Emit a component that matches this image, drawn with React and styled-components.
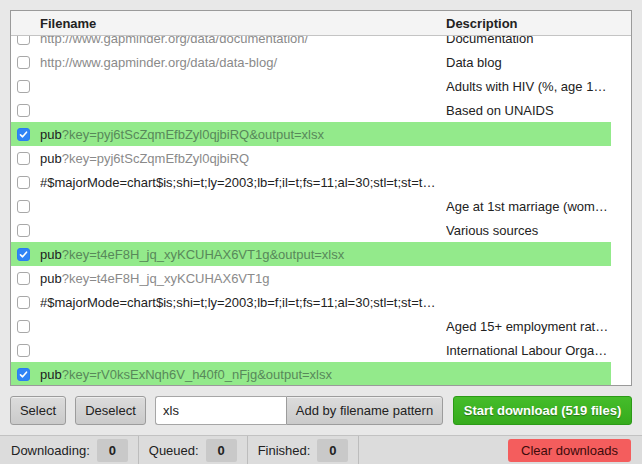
import React from "react";
import styled, { createGlobalStyle } from "styled-components";

const GlobalStyle = createGlobalStyle`
  html, body {
    margin: 0;
    padding: 0;
    background: #e8e8e8;
    font-family: "Liberation Sans", Arial, sans-serif;
    font-size: 13px;
    color: #222;
  }
`;

const Page = styled.div`
  width: 642px;
  height: 464px;
  display: flex;
  flex-direction: column;
  overflow: hidden;
`;

const TablePanel = styled.div`
  margin: 10px 10px 0 10px;
  height: 376px;
  box-sizing: border-box;
  border: 1px solid #9a9a9a;
  background: #fff;
  display: flex;
  flex-direction: column;
  overflow: hidden;
`;

const Cols = styled.div`
  display: grid;
  grid-template-columns: 29px 406px 1fr;
  align-items: center;
`;

const HeaderRow = styled(Cols)`
  height: 24px;
  flex-shrink: 0;
  background: #f4f4f4;
  border-bottom: 1px solid #c4c4c4;
  font-weight: bold;
  color: #222;
  padding-right: 20px;
`;

const Body = styled.div`
  flex: 1;
  overflow: hidden;
  padding-right: 20px;
`;

const List = styled.div`
  margin-top: -10px;
`;

const Row = styled(Cols)`
  height: 24px;
  background: ${(p) => (p.$checked ? "#93ea8b" : "#fff")};
`;

const Cell = styled.div`
  white-space: nowrap;
  overflow: hidden;
  text-overflow: ellipsis;
  padding-right: ${(p) => p.$pr ?? 8}px;
`;

const CheckCell = styled.div`
  padding-left: 6px;
  display: flex;
  align-items: center;
`;

const Box = styled.span`
  width: 13px;
  height: 13px;
  box-sizing: border-box;
  border-radius: 3px;
  border: 1px solid ${(p) => (p.$checked ? "#2b7cf3" : "#a8a8a8")};
  background: ${(p) => (p.$checked ? "#3084f5" : "#fff")};
  display: flex;
  align-items: center;
  justify-content: center;
`;

const Dim = styled.span`
  color: ${(p) => (p.$onGreen ? "#58885a" : "#8a8a8a")};
`;

const Dark = styled.span`
  color: #222;
`;

const Toolbar = styled.div`
  display: flex;
  align-items: center;
  padding: 10px;
  height: 29px;
  gap: 9px;
`;

const Button = styled.button`
  font-family: inherit;
  font-size: 13px;
  white-space: nowrap;
  width: ${(p) => p.$w}px;
  height: 29px;
  box-sizing: border-box;
  padding: 0;
  border: 1px solid #9c9c9c;
  border-radius: ${(p) => (p.$joined ? "0 3px 3px 0" : "3px")};
  background: linear-gradient(#dcdcdc, #cacaca);
  color: #222;
  box-shadow: inset 0 1px 0 rgba(255, 255, 255, 0.5);
`;

const PatternGroup = styled.div`
  display: flex;
`;

const PatternInput = styled.input`
  font-family: inherit;
  font-size: 13px;
  width: 131px;
  height: 29px;
  box-sizing: border-box;
  border: 1px solid #a6a6a6;
  border-right: none;
  border-radius: 3px 0 0 3px;
  padding: 0 7px;
  background: #fff;
  color: #222;
  outline: none;
`;

const StartButton = styled.button`
  font-family: inherit;
  font-size: 13px;
  font-weight: bold;
  white-space: nowrap;
  height: 29px;
  width: 179px;
  margin-left: 1px;
  padding: 0;
  box-sizing: border-box;
  border: 1px solid #2c9a17;
  border-radius: 3px;
  background: linear-gradient(#45bd2a, #36ab1d);
  color: #fff;
  text-shadow: 0 1px 1px rgba(0, 0, 0, 0.35);
`;

const StatusBar = styled.div`
  flex: 1;
  display: flex;
  align-items: center;
  background: #dcdcdc;
  border-top: 1px solid #c2c2c2;
`;

const Stat = styled.div`
  display: flex;
  align-items: center;
  align-self: stretch;
  gap: 7px;
  padding: 0 10px 0 ${(p) => (p.$first ? 11 : 10)}px;
  border-right: 1px solid #bdbdbd;
  color: #222;
`;

const Badge = styled.span`
  display: inline-flex;
  align-items: center;
  justify-content: center;
  width: 31px;
  height: 23px;
  background: #c9c9c9;
  border-radius: 2px;
  font-weight: bold;
`;

const ClearButton = styled.button`
  font-family: inherit;
  font-size: 13px;
  margin: 0 11px 0 auto;
  width: 123px;
  height: 23px;
  padding: 0;
  border: none;
  border-radius: 3px;
  background: #f45d5d;
  color: #3d0b0b;
`;

const rows = [
  { url: "http://www.gapminder.org/data/documentation/", desc: "Documentation" },
  { url: "http://www.gapminder.org/data/data-blog/", desc: "Data blog" },
  { desc: "Adults with HIV (%, age 15-49)" },
  { desc: "Based on UNAIDS" },
  { pub: "?key=pyj6tScZqmEfbZyl0qjbiRQ&output=xlsx", checked: true },
  { pub: "?key=pyj6tScZqmEfbZyl0qjbiRQ" },
  { hash: "#$majorMode=chart$is;shi=t;ly=2003;lb=f;il=t;fs=11;al=30;stl=t;st=t;nsl=t;se=t" },
  { desc: "Age at 1st marriage (women)" },
  { desc: "Various sources" },
  { pub: "?key=t4eF8H_jq_xyKCUHAX6VT1g&output=xlsx", checked: true },
  { pub: "?key=t4eF8H_jq_xyKCUHAX6VT1g" },
  { hash: "#$majorMode=chart$is;shi=t;ly=2003;lb=f;il=t;fs=11;al=30;stl=t;st=t;nsl=t;se=t" },
  { desc: "Aged 15+ employment rate (%)" },
  { desc: "International Labour Organization" },
  { pub: "?key=rV0ksExNqh6V_h40f0_nFjg&output=xlsx", checked: true },
];

function Check({ checked }) {
  return (
    <Box $checked={checked}>
      {checked && (
        <svg width="9" height="9" viewBox="0 0 9 9">
          <path d="M1.5 4.8 L3.6 6.8 L7.5 2.2" fill="none" stroke="#fff" strokeWidth="1.6" strokeLinecap="round" strokeLinejoin="round" />
        </svg>
      )}
    </Box>
  );
}

function FileName({ row }) {
  if (row.url) return <Dim>{row.url}</Dim>;
  if (row.pub)
    return (
      <>
        <Dark>pub</Dark>
        <Dim $onGreen={row.checked}>{row.pub}</Dim>
      </>
    );
  if (row.hash) return <Dark>{row.hash}</Dark>;
  return null;
}

export default function App() {
  return (
    <Page>
      <GlobalStyle />
      <TablePanel>
        <HeaderRow>
          <span />
          <Cell>Filename</Cell>
          <Cell>Description</Cell>
        </HeaderRow>
        <Body>
          <List>
            {rows.map((row, i) => (
              <Row key={i} $checked={row.checked}>
                <CheckCell>
                  <Check checked={row.checked} />
                </CheckCell>
                <Cell>
                  <FileName row={row} />
                </Cell>
                <Cell $pr={2}>{row.desc}</Cell>
              </Row>
            ))}
          </List>
        </Body>
      </TablePanel>
      <Toolbar>
        <Button $w={56}>Select</Button>
        <Button $w={71}>Deselect</Button>
        <PatternGroup>
          <PatternInput defaultValue="xls" />
          <Button $joined $w={157}>Add by filename pattern</Button>
        </PatternGroup>
        <StartButton>Start download (519 files)</StartButton>
      </Toolbar>
      <StatusBar>
        <Stat $first>
          Downloading: <Badge>0</Badge>
        </Stat>
        <Stat>
          Queued: <Badge>0</Badge>
        </Stat>
        <Stat>
          Finished: <Badge>0</Badge>
        </Stat>
        <ClearButton>Clear downloads</ClearButton>
      </StatusBar>
    </Page>
  );
}
